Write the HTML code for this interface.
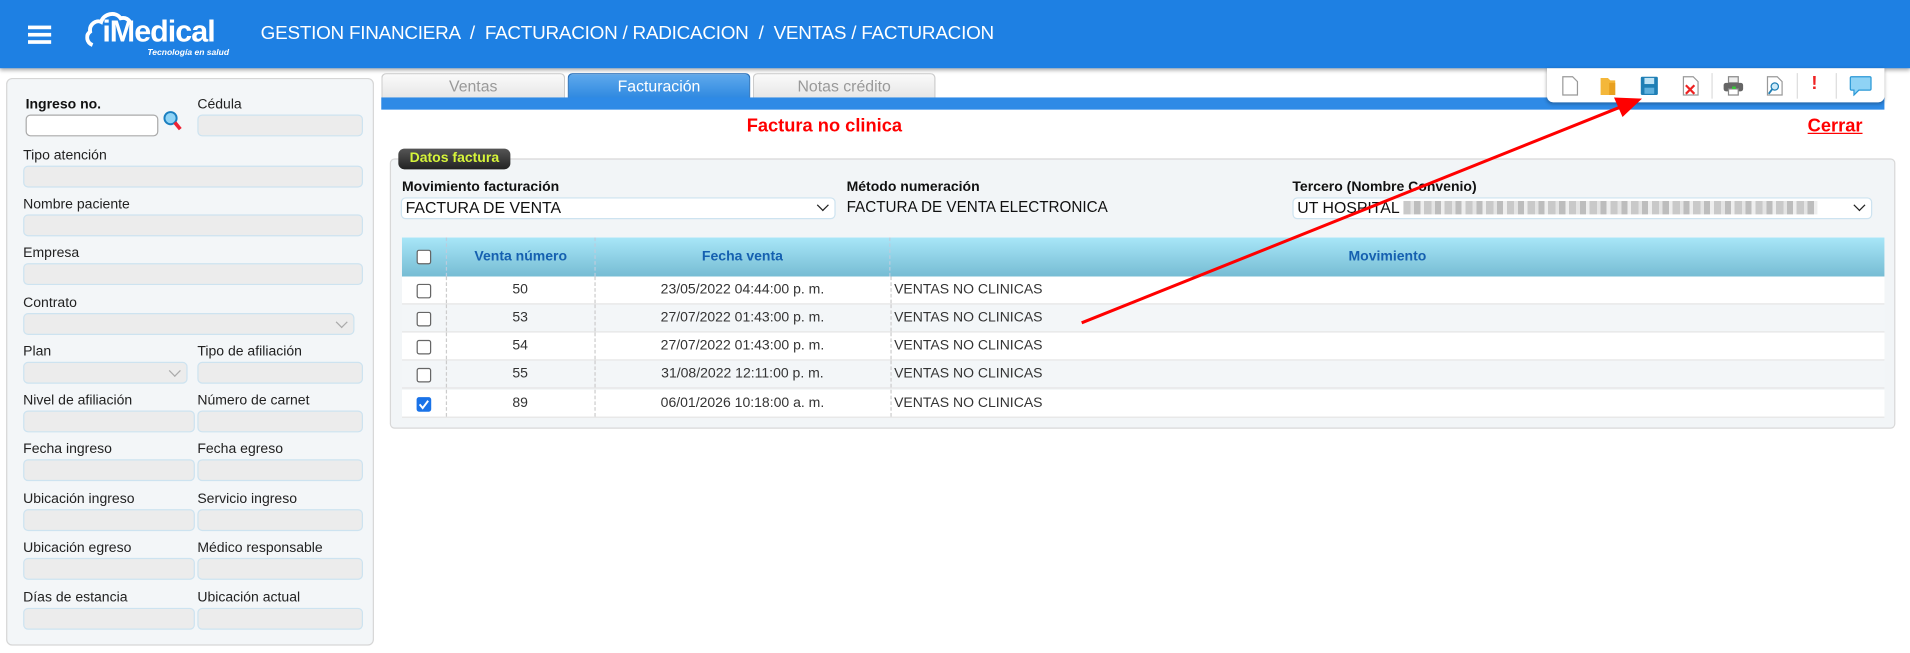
<!DOCTYPE html>
<html><head><meta charset="utf-8">
<style>
*{box-sizing:border-box;margin:0;padding:0}
html,body{width:1910px;height:652px;overflow:hidden;background:#fff;font-family:"Liberation Sans",Arial,sans-serif}
#s{position:absolute;left:0;top:0;width:1568px;height:536px;transform:scale(1.21811);transform-origin:0 0}
.a{position:absolute}
.hdr{left:0;top:0;width:1568px;height:56px;background:#1e80e3;box-shadow:0 2px 3px rgba(0,0,0,.3)}
.lbl{position:absolute;font-size:11.5px;color:#222}
.inp{position:absolute;height:18px;background:#ececec;border:1px solid #cde3f0;border-radius:4px}
.chev{position:absolute;right:6px;top:3px;width:7px;height:7px;border-right:1.3px solid #aaa;border-bottom:1.3px solid #aaa;transform:rotate(45deg)}
.tab{position:absolute;top:60px;height:21px;border:1px solid #ccc;border-bottom:none;border-radius:4px 4px 0 0;background:linear-gradient(#fafafa,#e6e6e6);color:#999;font-size:13px;text-align:center;line-height:20px}
.row{position:absolute;left:330px;width:1217px;height:23px;border-bottom:1px solid #e4e4e4;font-size:11.5px;color:#333}
.row div{position:absolute;top:0;height:23px;line-height:23px}
.cb{position:absolute;left:12px;top:6px;width:12px;height:12px;border:1px solid #666;border-radius:2px;background:#fff}
.sep{position:absolute;top:0;bottom:0;border-left:1px dashed #ccc}
.ico{position:absolute;top:62px;width:16px;height:17px}
</style></head><body>
<div id="s">
<div class="a hdr"></div>
<div class="a" style="left:23px;top:21px;width:19px;height:2.5px;background:#fff;box-shadow:0 6px 0 #fff,0 12px 0 #fff"></div>
<svg class="a" style="left:70px;top:7px" width="40" height="34" viewBox="0 0 40 34"><path d="M6 30 C1 28 0 22 4 19 C3 13 9 9 13 11 C15 4 25 2 29 8 C33 7 36 9 37 12" fill="none" stroke="#fff" stroke-width="3.2"/></svg>
<div class="a" style="left:84px;top:12px;color:#fff;font-weight:bold;font-size:25px;letter-spacing:-0.8px">iMedical</div>
<div class="a" style="left:121px;top:40px;color:#fff;font-weight:bold;font-style:italic;font-size:7px">Tecnología en salud</div>
<div class="a" style="left:214px;top:19px;color:#fff;font-size:15.5px;white-space:nowrap;letter-spacing:-0.2px">GESTION FINANCIERA &nbsp;/&nbsp; FACTURACION / RADICACION &nbsp;/&nbsp; VENTAS / FACTURACION</div>

<!-- left panel -->
<div class="a" style="left:5px;top:64px;width:302px;height:466px;background:#f3f6f8;border:1px solid #d6d6d6;border-radius:5px"></div>
<div class="lbl" style="left:21px;top:80px;font-weight:bold;color:#111">Ingreso no.</div>
<div class="inp" style="left:21px;top:94px;width:109px;background:#fff;border-color:#aaa"></div>
<svg class="a" style="left:133px;top:90px" width="17" height="18" viewBox="0 0 17 18"><circle cx="7" cy="7" r="5" fill="#8fd3f5" stroke="#1a7fc0" stroke-width="1.6"/><path d="M10.5 10.5 L15 16" stroke="#e23" stroke-width="3"/></svg>
<div class="lbl" style="left:162px;top:80px">Cédula</div>
<div class="inp" style="left:162px;top:94px;width:136px"></div>

<div class="lbl" style="left:19px;top:122px">Tipo atención</div><div class="inp" style="left:19px;top:136px;width:279px"></div>
<div class="lbl" style="left:19px;top:162px">Nombre paciente</div><div class="inp" style="left:19px;top:176px;width:279px"></div>
<div class="lbl" style="left:19px;top:202px">Empresa</div><div class="inp" style="left:19px;top:216px;width:279px"></div>
<div class="lbl" style="left:19px;top:243px">Contrato</div><div class="inp" style="left:19px;top:257px;width:272px"><span class="chev"></span></div>
<div class="lbl" style="left:19px;top:283px">Plan</div><div class="inp" style="left:19px;top:297px;width:135px"><span class="chev"></span></div>
<div class="lbl" style="left:162px;top:283px">Tipo de afiliación</div><div class="inp" style="left:162px;top:297px;width:136px"></div>
<div class="lbl" style="left:19px;top:323px">Nivel de afiliación</div><div class="inp" style="left:19px;top:337px;width:141px"></div>
<div class="lbl" style="left:162px;top:323px">Número de carnet</div><div class="inp" style="left:162px;top:337px;width:136px"></div>
<div class="lbl" style="left:19px;top:363px">Fecha ingreso</div><div class="inp" style="left:19px;top:377px;width:141px"></div>
<div class="lbl" style="left:162px;top:363px">Fecha egreso</div><div class="inp" style="left:162px;top:377px;width:136px"></div>
<div class="lbl" style="left:19px;top:404px">Ubicación ingreso</div><div class="inp" style="left:19px;top:418px;width:141px"></div>
<div class="lbl" style="left:162px;top:404px">Servicio ingreso</div><div class="inp" style="left:162px;top:418px;width:136px"></div>
<div class="lbl" style="left:19px;top:444px">Ubicación egreso</div><div class="inp" style="left:19px;top:458px;width:141px"></div>
<div class="lbl" style="left:162px;top:444px">Médico responsable</div><div class="inp" style="left:162px;top:458px;width:136px"></div>
<div class="lbl" style="left:19px;top:485px">Días de estancia</div><div class="inp" style="left:19px;top:499px;width:141px"></div>
<div class="lbl" style="left:162px;top:485px">Ubicación actual</div><div class="inp" style="left:162px;top:499px;width:136px"></div>

<!-- tabs -->
<div class="tab" style="left:313px;width:151px">Ventas</div>
<div class="tab" style="left:466px;width:150px;background:linear-gradient(#5fa9ec,#2e88e0);color:#fff;border-color:#2a70b8">Facturación</div>
<div class="tab" style="left:618px;width:150px">Notas crédito</div>
<div class="a" style="left:313px;top:80px;width:1234px;height:10px;background:#2e8ae6"></div>

<!-- toolbar -->
<div class="a" style="left:1270px;top:56px;width:277px;height:28px;background:#fff;border-radius:0 0 5px 5px;box-shadow:0 1px 3px rgba(0,0,0,.3)"></div>
<svg class="ico" style="left:1281px" viewBox="0 0 16 17"><path d="M2 1h8l4 4v11H2z" fill="#fff" stroke="#999"/></svg>
<svg class="ico" style="left:1312px" viewBox="0 0 16 17"><path d="M2 2h6l2 2h4v12H2z" fill="#f4b73a"/><rect x="9" y="6" width="5" height="10" fill="#e8a020"/></svg>
<svg class="ico" style="left:1346px" viewBox="0 0 16 17"><rect x="1" y="1" width="14" height="15" rx="1" fill="#1f7fb5"/><rect x="4" y="2" width="8" height="5" fill="#bfe3f5"/><rect x="4" y="10" width="8" height="5" fill="#5fb0dd"/></svg>
<svg class="ico" style="left:1380px" viewBox="0 0 16 17"><path d="M2 1h8l4 4v11H2z" fill="#fff" stroke="#999"/><path d="M4 8l7 7M11 8l-7 7" stroke="#e22" stroke-width="1.8"/></svg>
<div class="a" style="left:1405px;top:60px;height:21px;border-left:1px solid #ddd"></div>
<svg class="ico" style="left:1414px;width:18px" viewBox="0 0 18 17"><rect x="5" y="1" width="8" height="5" fill="#eee" stroke="#888"/><rect x="1" y="6" width="16" height="7" rx="2" fill="#666"/><rect x="5" y="11" width="8" height="5" fill="#fff" stroke="#888"/><rect x="8" y="9" width="3" height="2" fill="#3c3"/></svg>
<svg class="ico" style="left:1449px" viewBox="0 0 16 17"><path d="M2 1h8l4 4v11H2z" fill="#fff" stroke="#999"/><circle cx="8" cy="9" r="3" fill="#cfeaf8" stroke="#1f7fb5"/><path d="M6 11l-3 4" stroke="#1f7fb5" stroke-width="1.5"/></svg>
<div class="a" style="left:1475px;top:60px;height:21px;border-left:1px solid #ddd"></div>
<div class="a" style="left:1487px;top:60px;color:#e22;font-weight:bold;font-size:15px">!</div>
<div class="a" style="left:1507px;top:60px;height:21px;border-left:1px solid #ddd"></div>
<svg class="ico" style="left:1518px;width:19px" viewBox="0 0 19 17"><path d="M2 1h15a1 1 0 0 1 1 1v9a1 1 0 0 1-1 1H8l-4 4v-4H2a1 1 0 0 1-1-1V2a1 1 0 0 1 1-1z" fill="#8fd3f5" stroke="#2a98d6"/></svg>

<div class="a" style="left:613px;top:95px;color:#f00;font-weight:bold;font-size:15px">Factura no clinica</div>
<div class="a" style="left:1484px;top:95px;color:#f00;font-weight:bold;font-size:15px;text-decoration:underline">Cerrar</div>

<!-- fieldset -->
<div class="a" style="left:320px;top:130px;width:1236px;height:222px;background:#f2f5f7;border:1px solid #d8d8d8;border-radius:4px"></div>
<div class="a" style="left:327px;top:122px;width:92px;height:17px;background:linear-gradient(#555,#222);border-radius:5px;color:#d6f53a;font-weight:bold;font-size:11.5px;text-align:center;line-height:17px">Datos factura</div>
<div class="lbl" style="left:330px;top:148px;font-weight:bold;color:#111">Movimiento facturación</div>
<div class="lbl" style="left:695px;top:148px;font-weight:bold;color:#111">Método numeración</div>
<div class="lbl" style="left:1061px;top:148px;font-weight:bold;color:#111">Tercero (Nombre Convenio)</div>
<div class="inp" style="left:329px;top:162px;width:357px;background:#fff;font-size:13px;line-height:16px;padding-left:3px;color:#111">FACTURA DE VENTA<span class="chev" style="border-color:#222;top:2px"></span></div>
<div class="lbl" style="left:695px;top:163px;font-size:12.5px;color:#111">FACTURA DE VENTA ELECTRONICA</div>
<div class="inp" style="left:1061px;top:162px;width:476px;background:#fff;font-size:13px;line-height:16px;padding-left:3px;color:#111">UT HOSPITAL <span style="display:inline-block;width:340px;height:11px;vertical-align:-1px;background:repeating-linear-gradient(90deg,#c9c9c9 0 6px,#e4e4e4 6px 9px,#bdbdbd 9px 14px,#eee 14px 17px)"></span><span class="chev" style="border-color:#222;top:2px"></span></div>

<!-- table -->
<div class="a" style="left:330px;top:195px;width:1217px;height:32px;background:linear-gradient(#a8e6f8,#76bcd3)"></div>
<div class="a" style="left:342px;top:205px;width:12px;height:12px;border:1px solid #666;border-radius:2px;background:#fff"></div>
<div class="a" style="left:366px;top:195px;width:122px;height:32px;line-height:32px;text-align:center;color:#1560b0;font-weight:bold;font-size:11.5px;border-left:1px dashed #bcd">Venta número</div>
<div class="a" style="left:488px;top:195px;width:243px;height:32px;line-height:32px;text-align:center;color:#1560b0;font-weight:bold;font-size:11.5px;border-left:1px dashed #bcd;border-right:1px dashed #bcd">Fecha venta</div>
<div class="a" style="left:731px;top:195px;width:816px;height:32px;line-height:32px;text-align:center;color:#1560b0;font-weight:bold;font-size:11.5px">Movimiento</div>

<div class="row" style="top:227px;background:#fff"><span class="cb"></span><span class="sep" style="left:36px"></span><span class="sep" style="left:158px"></span><span class="sep" style="left:401px"></span><div style="left:36px;width:122px;text-align:center">50</div><div style="left:158px;width:243px;text-align:center">23/05/2022 04:44:00 p. m.</div><div style="left:404px">VENTAS NO CLINICAS</div></div>
<div class="row" style="top:250px;background:#f3f6f8"><span class="cb"></span><span class="sep" style="left:36px"></span><span class="sep" style="left:158px"></span><span class="sep" style="left:401px"></span><div style="left:36px;width:122px;text-align:center">53</div><div style="left:158px;width:243px;text-align:center">27/07/2022 01:43:00 p. m.</div><div style="left:404px">VENTAS NO CLINICAS</div></div>
<div class="row" style="top:273px;background:#fff"><span class="cb"></span><span class="sep" style="left:36px"></span><span class="sep" style="left:158px"></span><span class="sep" style="left:401px"></span><div style="left:36px;width:122px;text-align:center">54</div><div style="left:158px;width:243px;text-align:center">27/07/2022 01:43:00 p. m.</div><div style="left:404px">VENTAS NO CLINICAS</div></div>
<div class="row" style="top:296px;background:#f3f6f8"><span class="cb"></span><span class="sep" style="left:36px"></span><span class="sep" style="left:158px"></span><span class="sep" style="left:401px"></span><div style="left:36px;width:122px;text-align:center">55</div><div style="left:158px;width:243px;text-align:center">31/08/2022 12:11:00 p. m.</div><div style="left:404px">VENTAS NO CLINICAS</div></div>
<div class="row" style="top:320px;background:#fff"><span class="cb" style="background:#1a73e8;border-color:#1a73e8"></span><svg class="a" style="left:13px;top:7px" width="10" height="10"><path d="M1.5 5l2.5 3 4.5-6" stroke="#fff" stroke-width="1.6" fill="none"/></svg><span class="sep" style="left:36px"></span><span class="sep" style="left:158px"></span><span class="sep" style="left:401px"></span><div style="left:36px;width:122px;text-align:center">89</div><div style="left:158px;width:243px;text-align:center">06/01/2026 10:18:00 a. m.</div><div style="left:404px">VENTAS NO CLINICAS</div></div>

<!-- arrow -->
<svg class="a" style="left:0;top:0" width="1568" height="536"><line x1="888" y1="265" x2="1330" y2="88" stroke="#f00" stroke-width="2.5"/><path d="M1348 81 L1325 80 L1332 96 Z" fill="#f00"/></svg>
</div>
</body></html>
